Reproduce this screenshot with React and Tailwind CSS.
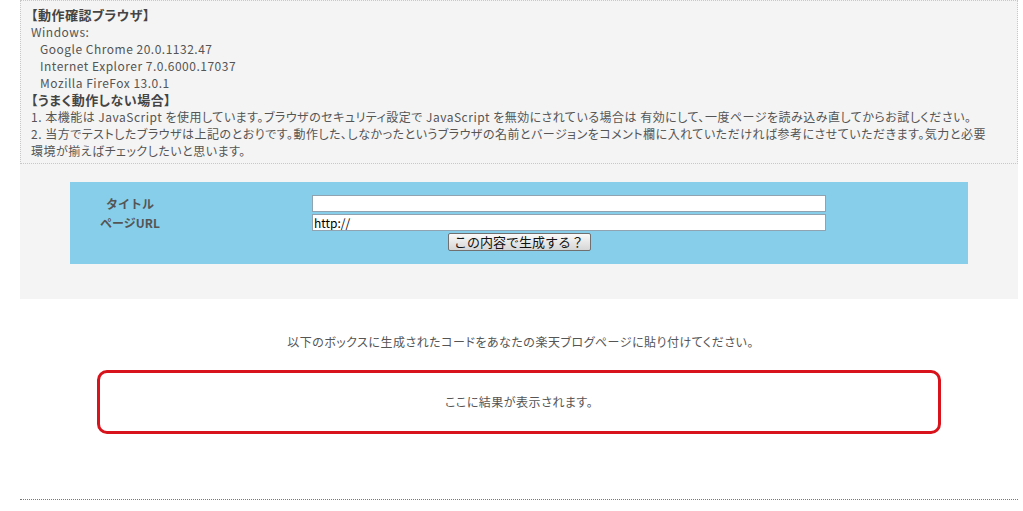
import React, { useState } from 'react';

const font = { fontFamily: '"Noto Sans CJK JP", "Liberation Sans", sans-serif' };

function App() {
  const [title, setTitle] = useState('');
  const [url, setUrl] = useState('http://');

  return (
    <div className="min-h-screen bg-white" style={font}>
      <div className="mx-[20px] w-[998px] bg-[#f4f4f4] pb-[35px]">
        {/* 動作確認 */}
        <div className="border border-dotted border-[#c8c8c8] px-[10px] pt-[5px] pb-[4px] text-[12px] leading-[17px] text-[#555] tracking-[0.5px] [font-feature-settings:'palt']">
          <p className="font-bold text-[13px] text-[#444]">【動作確認ブラウザ】</p>
          <p>Windows:</p>
          <p className="pl-[9px]">Google Chrome 20.0.1132.47</p>
          <p className="pl-[9px]">Internet Explorer 7.0.6000.17037</p>
          <p className="pl-[9px]">Mozilla FireFox 13.0.1</p>
          <p className="font-bold text-[13px] text-[#444]">【うまく動作しない場合】</p>
          <p>1. 本機能は JavaScript を使用しています。ブラウザのセキュリティ設定で JavaScript を無効にされている場合は 有効にして、一度ページを読み込み直してからお試しください。</p>
          <p>2. 当方でテストしたブラウザは上記のとおりです。動作した、しなかったというブラウザの名前とバージョンをコメント欄に入れていただければ参考にさせていただきます。気力と必要<br />環境が揃えばチェックしたいと思います。</p>
        </div>

        {/* 入力フォーム */}
        <div className="mx-[50px] mt-[18px] h-[82px] bg-[#87ceeb] pt-[12px] text-[12px]">
          <div className="flex items-center h-[19px]">
            <div className="w-[120px] text-center font-bold text-[#555] leading-[16px]">タイトル</div>
            <input
              value={title}
              onChange={(e) => setTitle(e.target.value)}
              className="ml-[122px] h-[17px] w-[514px] border border-[#8fa4b0] bg-white px-[1px] text-[12px] leading-[15px] text-black outline-none"
            />
          </div>
          <div className="flex items-center h-[19px]">
            <div className="w-[120px] text-center font-bold text-[#555] leading-[16px]">ページURL</div>
            <input
              value={url}
              onChange={(e) => setUrl(e.target.value)}
              className="ml-[122px] h-[17px] w-[514px] border border-[#8fa4b0] bg-white px-[1px] text-[12px] leading-[15px] text-black outline-none"
            />
          </div>
          <div className="flex justify-center mt-[1px]">
            <button className="h-[18px] w-[143px] rounded-[2px] border border-[#707070] bg-gradient-to-b from-[#fafafa] to-[#d6d6d6] text-[13px] leading-[14px] text-[#111]">
              この内容で生成する？
            </button>
          </div>
        </div>
      </div>

      {/* 結果 */}
      <p className="mt-[34px] text-center text-[12px] leading-[17px] text-[#555] tracking-[0.5px] [font-feature-settings:'palt'] pl-[18px]">
        以下のボックスに生成されたコードをあなたの楽天ブログページに貼り付けてください。
      </p>
      <div className="mx-[97px] mt-[20px] flex h-[64px] w-[844px] items-center justify-center rounded-[10px] border-[3px] border-[#d8131b] text-[12px] text-[#555] tracking-[0.5px] [font-feature-settings:'palt']">
        ここに結果が表示されます。
      </div>

      <div className="mx-[20px] mt-[65px] w-[998px] border-t border-dotted border-[#777]" />
    </div>
  );
}

export default App;
